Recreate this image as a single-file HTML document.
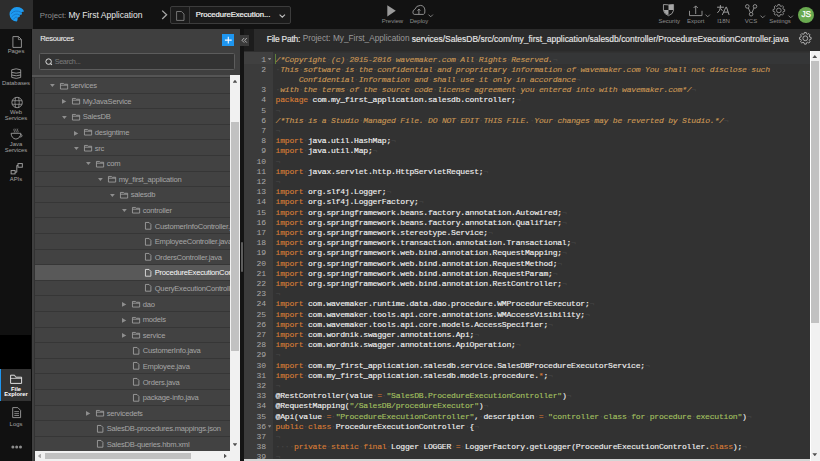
<!DOCTYPE html>
<html><head><meta charset="utf-8">
<style>
*{box-sizing:border-box;margin:0;padding:0}
html,body{width:820px;height:461px;overflow:hidden;background:#111;font-family:"Liberation Sans",sans-serif}
.abs{position:absolute}
#hdr{position:absolute;left:0;top:0;width:820px;height:28.8px;background:#121212}
#logo{position:absolute;left:0;top:0;width:33px;height:28.8px;background:#2d2d2d}
.proj{position:absolute;left:39.8px;top:9.6px;font-size:7.8px;color:#8f8f8f;white-space:pre;line-height:11px}
.proj b{font-weight:400;color:#e8e8e8;font-size:8.55px}
#dd{position:absolute;left:170.1px;top:6.4px;width:120.7px;height:17.4px;border:0.8px solid #3c3c3c;border-radius:2px;background:#1b1b1b}
#dd .div{position:absolute;left:18.4px;top:0;width:0.8px;height:100%;background:#3c3c3c}
#dd .t{position:absolute;left:24.6px;top:3px;font-size:7.7px;color:#f6f6f6;line-height:10px;white-space:pre;letter-spacing:-0.05px;-webkit-text-stroke:0.2px #f6f6f6}
.tl{position:absolute;font-size:6px;color:#8c8c8c;white-space:pre;line-height:7px;text-align:center}
svg{position:absolute;overflow:visible}
#side{position:absolute;left:0;top:28.8px;width:31.6px;height:432.2px;background:#111}
#sidesep{position:absolute;left:31.4px;top:28.8px;width:0.6px;height:432.2px;background:#0c0c0c}
.sl{position:absolute;left:0;width:32px;text-align:center;font-size:5.9px;line-height:5.9px;color:#a4a4a4}
#panel{position:absolute;left:31.6px;top:28.8px;width:208.4px;height:432.2px;background:#3f3f3f;overflow:hidden}
#tree{position:absolute;left:3.5px;top:49.2px;width:194.9px;height:373px;background:#3a3a3a;overflow:hidden}
#tbord{position:absolute;left:2.6px;top:48.8px;width:0.9px;height:383.4px;background:#333}
.res{position:absolute;left:8.6px;top:5.1px;font-size:7.6px;letter-spacing:-0.3px;color:#ececec;line-height:9px;-webkit-text-stroke:0.1px #ececec}
#plus{position:absolute;left:190px;top:5px;width:12.5px;height:12.1px;background:#1e96f0}
#search{position:absolute;left:7.8px;top:24.2px;width:195.9px;height:17.2px;border:0.8px solid #5c5c5c;border-radius:1.5px;background:#333}
#search .t{position:absolute;left:14.3px;top:3.5px;font-size:7.3px;letter-spacing:-0.38px;color:#7a7a7a;line-height:9px}
#hline{position:absolute;left:0;top:46.6px;width:208.4px;height:1.3px;background:#555}
#hline2{position:absolute;left:0;top:47.9px;width:208.4px;height:1.3px;background:#373737}
.row{position:absolute;left:0;width:194.9px;height:15.6px;background:#424242;border-bottom:0.7px solid #363636}
.row.sel{background:#595959}
.tn{position:absolute;top:4.3px;font-size:7.6px;letter-spacing:-0.22px;color:#a6a6a6;line-height:8px;white-space:pre}
.sel .tn{color:#fafafa}
.ic{position:absolute}
.tri-d{position:absolute;top:6.2px;width:0;height:0;border-left:2.9px solid transparent;border-right:2.9px solid transparent;border-top:4.4px solid #909090;margin-left:-2.9px}
.tri-r{position:absolute;top:4.9px;width:0;height:0;border-top:2.9px solid transparent;border-bottom:2.9px solid transparent;border-left:4.8px solid #909090;margin-left:-2.4px}
.fold-ic{position:absolute;top:5.6px;width:8px;height:5.6px;border:0.8px solid #9c9c9c;border-radius:0.5px}
.fold-ic:before{content:"";position:absolute;left:-0.8px;top:-1.8px;width:3.6px;height:1.8px;border:0.8px solid #9c9c9c;border-bottom:none;border-radius:0.5px 0.5px 0 0}
.fold-ic:after{content:"";position:absolute;left:0;top:0.9px;width:6.4px;height:0.7px;background:#9c9c9c}
.file-ic{position:absolute;top:4.5px;width:6.4px;height:7.6px}
.file-ic:before{content:"";position:absolute;left:0;top:0;width:6.4px;height:7.6px;background:#a8a8a8;clip-path:polygon(0 0,62% 0,100% 32%,100% 100%,0 100%,0 0,13% 10%,13% 90%,87% 90%,87% 38%,58% 10%,13% 10%)}
.sel .file-ic:before{background:#e8e8e8}
#vs{position:absolute;left:198.4px;top:46.3px;width:10px;height:375.9px;background:#f1f1f1}
#vs .th{position:absolute;left:1.3px;top:47.1px;width:8.1px;height:228.4px;background:#c1c1c1}
#hs{position:absolute;left:3.5px;top:422.2px;width:194.9px;height:10px;background:#f1f1f1}
#hs .th{position:absolute;left:10.3px;top:1.7px;width:145.6px;height:6.6px;background:#c1c1c1}
#corner{position:absolute;left:198.4px;top:422.2px;width:10px;height:10px;background:#f1f1f1}
.arr-u{position:absolute;width:4.8px;height:3px;background:#505050;clip-path:polygon(50% 0,100% 100%,0 100%)}
.arr-d{position:absolute;width:4.8px;height:3px;background:#505050;clip-path:polygon(0 0,100% 0,50% 100%)}
.arr-l{position:absolute;width:3px;height:4.8px;background:#a3a3a3;clip-path:polygon(0 50%,100% 0,100% 100%)}
.arr-r{position:absolute;width:3px;height:4.8px;background:#505050;clip-path:polygon(0 0,100% 50%,0 100%)}
#strip{position:absolute;left:240px;top:28.8px;width:4px;height:432.2px;background:#141414}
#coll{position:absolute;left:240.3px;top:35.3px;width:8.7px;height:10.6px;background:#3a3a3a}
#fpleft{position:absolute;left:244px;top:28.8px;width:9.7px;height:21.8px;background:#1c1c1c}
#fp{position:absolute;left:253.7px;top:28.8px;width:566.3px;height:21.8px;background:#2b2b2b}
#fp .t{position:absolute;top:5.4px;font-size:8.4px;color:#e6e6e6;line-height:10px;white-space:pre}
#fp .t.g{color:#9a9a9a}
#edsep{position:absolute;left:244px;top:50.6px;width:576px;height:0.9px;background:#2f2f2f}
#gutter{position:absolute;left:244px;top:51.5px;width:29.2px;height:408px;background:#3b3b3b}
#code{position:absolute;left:273.2px;top:51.5px;width:536.5px;height:408px;background:#323232}
#gact{position:absolute;left:244px;top:51.5px;width:29.2px;height:12.1px;background:#404040}
#cact{position:absolute;left:273.2px;top:53.4px;width:536.5px;height:10.2px;background:#353637}
#cursor{position:absolute;left:274.9px;top:53.8px;width:1.2px;height:9.8px;background:#6f9a3a;opacity:.75}
.ln{position:absolute;left:244px;width:21.8px;height:10.2px;line-height:10.2px;text-align:right;font-family:"Liberation Mono",monospace;font-size:8.1px;letter-spacing:-0.24px;color:#a8a8a8}
.ln .fold{position:absolute;left:23.8px;top:3.5px;width:3.6px;height:2.4px;background:#8a8a8a;clip-path:polygon(0 0,100% 0,50% 100%)}
.cl{position:absolute;left:275.6px;height:10.2px;line-height:10.2px;font-family:"Liberation Mono",monospace;font-size:8.1px;letter-spacing:-0.24px;color:#f4f4f4;white-space:pre;-webkit-text-stroke:0.12px currentColor}
.cl .k{color:#d97d36}
.cl .c{color:#cc9855;font-style:italic}
.cl .s{color:#a5c261}
.cl .iv{color:#464646;font-style:normal}
#evs{position:absolute;left:809.8px;top:50.6px;width:10.2px;height:410.4px;background:#f1f1f1;border-left:1.2px solid #fff}
#evs .th{position:absolute;left:0.3px;top:10.8px;width:7.6px;height:262px;background:#c1c1c1}
#ehs{position:absolute;left:244px;top:459.3px;width:565.7px;height:1.7px;background:#d6d6d6}
</style></head><body>
<div id="hdr">
  <div id="logo">
    <svg width="33" height="29" style="left:0;top:0" viewBox="0 0 33 29">
      <path d="M16.8 21.6 A7.25 7.25 0 0 1 16.8 7.1 Q22.5 7.3 24.1 11.6 Q22.6 11.7 21.3 12.5 Q22.4 13.3 21.9 14.5 Q20.6 14.5 19.7 15.1 Q20.2 16 19.7 16.8 Q18.4 17 17.6 18 Q17.9 20.4 16.8 21.6 Z" fill="#1d9af0"/>
      <path d="M10.9 13.9 Q15.2 8.9 21.5 12.5 M11.7 16.9 Q15.6 12.4 19.8 15.1 M13.4 19.4 Q16 15.6 17.7 18" stroke="#1673c2" stroke-width="0.9" fill="none"/>
    </svg>
  </div>
  <div class="proj">Project: <b>My First Application</b></div>
  <svg width="8" height="10" style="left:161px;top:9.8px" viewBox="0 0 8 10"><path d="M1.2 0.6 L5.6 4.8 L1.2 9" stroke="#a8a8a8" stroke-width="1.3" fill="none"/></svg>
  <div id="dd"><div class="div"></div>
    <svg width="9" height="10" style="left:5.2px;top:3.6px" viewBox="0 0 9 10"><path d="M0.6 0.5 H5.4 L8 3 V9.4 H0.6 Z" stroke="#8a8a8a" stroke-width="0.8" fill="none"/></svg>
    <div class="t">ProcedureExecution...</div>
    <svg width="7" height="4" style="left:108.2px;top:6.8px" viewBox="0 0 7 4"><path d="M0.6 0.6 L3.3 3.2 L6 0.6" stroke="#c0c0c0" stroke-width="1.1" fill="none"/></svg>
  </div>
  <!-- Preview -->
  <svg width="10" height="12" style="left:387.1px;top:4.6px" viewBox="0 0 10 12"><path d="M0.3 0.2 L8.8 5.8 L0.3 11.4 Z" fill="#9b9b9b"/></svg>
  <div class="tl" style="left:381.5px;top:17.8px;width:22px">Preview</div>
  <!-- Deploy -->
  <svg width="15" height="12" style="left:412px;top:4px" viewBox="0 0 15 12"><path d="M2.2 10.4 Q0.9 10.2 0.9 8.2 Q0.9 6 2.8 5.4 Q4.2 1.4 8.4 1.4 Q12.4 1.6 12.9 6 Q13.3 10.2 11.4 10.4 Z" stroke="#9c9c9c" stroke-width="0.9" fill="none"/><path d="M6.9 10.2 V5.2 M5.5 6.6 L6.9 5 L8.3 6.6" stroke="#9c9c9c" stroke-width="0.9" fill="none"/></svg>
  <svg width="6" height="4" style="left:428px;top:14.4px" viewBox="0 0 6 4"><path d="M0.5 0.6 L2.7 2.8 L4.9 0.6" stroke="#9a9a9a" stroke-width="0.8" fill="none"/></svg>
  <div class="tl" style="left:409.5px;top:17.8px;width:19px">Deploy</div>
  <!-- Security -->
  <svg width="12" height="13" style="left:662.9px;top:4.3px" viewBox="0 0 12 13"><path d="M0.45 0.5 Q5.5 1.2 10.55 0.5 V6.2 Q10.3 9.9 5.5 11.7 Q0.7 9.9 0.45 6.2 Z" fill="#151515" stroke="#a0a0a0" stroke-width="0.9"/><path d="M5.5 0.95 Q8 1 10.1 0.85 V6 H5.5 Z" fill="#a6a6a6"/><path d="M0.9 6 H5.5 V11.1 Q1.2 9.4 0.9 6 Z" fill="#a6a6a6"/></svg>
  <div class="tl" style="left:658px;top:17.8px;width:22.5px">Security</div>
  <!-- Export -->
  <svg width="14" height="12" style="left:688.8px;top:5px" viewBox="0 0 14 12"><path d="M0.5 5.8 V10.6 H13 V5.8" stroke="#9a9a9a" stroke-width="0.9" fill="none"/><path d="M6.7 9 V0.9 M4.6 3 L6.7 0.9 L8.8 3" stroke="#9a9a9a" stroke-width="0.9" fill="none"/></svg>
  <svg width="6" height="4" style="left:705px;top:14.4px" viewBox="0 0 6 4"><path d="M0.5 0.6 L2.7 2.8 L4.9 0.6" stroke="#9a9a9a" stroke-width="0.8" fill="none"/></svg>
  <div class="tl" style="left:686.5px;top:17.8px;width:18.5px">Export</div>
  <!-- I18N -->
  <svg width="16" height="14" style="left:716px;top:4px" viewBox="0 0 16 14"><path d="M1.1 3.2 H7.9 M4.4 1.1 V3.6 Q4.1 6.6 1.4 8.9 M4.7 4.6 L6.4 6.8" stroke="#a8a8a8" stroke-width="0.95" fill="none"/><path d="M6.3 10.9 L9.9 3.2 H10.5 L13.1 10.9 M7.6 8.1 H11.9" stroke="#a8a8a8" stroke-width="0.95" fill="none"/></svg>
  <div class="tl" style="left:716.5px;top:17.8px;width:14px">I18N</div>
  <!-- VCS -->
  <svg width="13" height="13" style="left:745px;top:3.9px" viewBox="0 0 13 13"><circle cx="2.3" cy="2.4" r="1.8" stroke="#9a9a9a" stroke-width="0.9" fill="none"/><circle cx="10" cy="2.4" r="1.8" stroke="#9a9a9a" stroke-width="0.9" fill="none"/><circle cx="6.1" cy="10.2" r="1.8" stroke="#9a9a9a" stroke-width="0.9" fill="none"/><path d="M3.3 3.9 L5.3 8.6 M9 3.9 L7 8.6" stroke="#9a9a9a" stroke-width="0.9"/></svg>
  <svg width="6" height="4" style="left:759.6px;top:14.5px" viewBox="0 0 6 4"><path d="M0.5 0.6 L2.7 2.8 L4.9 0.6" stroke="#9a9a9a" stroke-width="0.8" fill="none"/></svg>
  <div class="tl" style="left:744.5px;top:17.8px;width:13px">VCS</div>
  <!-- Settings -->
  <svg width="14" height="14" style="left:771.6px;top:3.6px" viewBox="0 0 14 14" id="gear1"><g transform="translate(6.85 6.4)"><path id="gp" d="M-0.92 -5.83 L0.92 -5.83 L1.16 -4.45 L2.33 -3.97 L3.47 -4.77 L4.77 -3.47 L3.97 -2.33 L4.45 -1.16 L5.83 -0.92 L5.83 0.92 L4.45 1.16 L3.97 2.33 L4.77 3.47 L3.47 4.77 L2.33 3.97 L1.16 4.45 L0.92 5.83 L-0.92 5.83 L-1.16 4.45 L-2.33 3.97 L-3.47 4.77 L-4.77 3.47 L-3.97 2.33 L-4.45 1.16 L-5.83 0.92 L-5.83 -0.92 L-4.45 -1.16 L-3.97 -2.33 L-4.77 -3.47 L-3.47 -4.77 L-2.33 -3.97 L-1.16 -4.45 Z" stroke="#9a9a9a" stroke-width="0.85" fill="none" stroke-linejoin="round"/><circle r="2.3" stroke="#9a9a9a" stroke-width="0.85" fill="none"/></g></svg>
  <svg width="6" height="4" style="left:787.8px;top:14.5px" viewBox="0 0 6 4"><path d="M0.5 0.6 L2.7 2.8 L4.9 0.6" stroke="#9a9a9a" stroke-width="0.8" fill="none"/></svg>
  <div class="tl" style="left:768.5px;top:17.8px;width:23px">Settings</div>
  <!-- avatar -->
  <div class="abs" style="left:798.2px;top:6.6px;width:16px;height:16px;border-radius:50%;background:#6aaa50"></div>
  <div class="abs" style="left:798.2px;top:11.3px;width:16px;text-align:center;font-size:8.2px;line-height:8px;font-weight:400;letter-spacing:-0.2px;color:#fff;-webkit-text-stroke:0.25px #fff">JS</div>
</div>

<div id="side">
  <!-- Pages -->
  <svg width="11" height="13" style="left:12px;top:7.2px" viewBox="0 0 11 13"><path d="M0.9 0.6 H6.6 L9.4 3.4 V11.4 H0.9 Z" stroke="#9d9d9d" stroke-width="0.9" fill="none" stroke-linejoin="round"/><path d="M6.4 0.8 V3.6 H9.2" stroke="#9d9d9d" stroke-width="0.7" fill="none"/></svg>
  <div class="sl" style="top:20.4px">Pages</div>
  <!-- Databases -->
  <svg width="12" height="12" style="left:11.4px;top:38.9px" viewBox="0 0 12 12"><path d="M0.7 1.8 Q5.2 -0.2 9.7 1.8 V9.4 Q5.2 11.4 0.7 9.4 Z" stroke="#9d9d9d" stroke-width="0.9" fill="none"/><path d="M0.7 4.4 Q5.2 6 9.7 4.4 M0.7 7 Q5.2 8.6 9.7 7" stroke="#9d9d9d" stroke-width="0.9" fill="none"/></svg>
  <div class="sl" style="top:52.1px">Databases</div>
  <!-- Web Services -->
  <svg width="13" height="12" style="left:10.6px;top:67.9px" viewBox="0 0 13 12"><circle cx="6.1" cy="5.5" r="5.2" stroke="#9d9d9d" stroke-width="0.9" fill="none"/><path d="M1.2 3.7 H11 M1.2 7.3 H11 M4.5 0.7 Q3.4 5.5 4.5 10.3 M7.7 0.7 Q8.8 5.5 7.7 10.3" stroke="#9d9d9d" stroke-width="0.75" fill="none"/></svg>
  <div class="sl" style="top:81.3px">Web<br>Services</div>
  <!-- Java Services -->
  <svg width="14" height="12" style="left:10px;top:99.9px" viewBox="0 0 14 12"><path d="M4.2 -0.3 Q3.5 0.8 4.2 1.8 Q4.8 2.7 4.2 3.5 M6 -0.3 Q5.3 0.8 6 1.8 Q6.6 2.7 6 3.5 M7.8 -0.3 Q7.1 0.8 7.8 1.8 Q8.4 2.7 7.8 3.5" stroke="#9d9d9d" stroke-width="0.7" fill="none"/><path d="M1.1 4.3 H10.8 Q10.5 9.4 5.9 10.1 Q1.4 9.4 1.1 4.3 Z" stroke="#9d9d9d" stroke-width="0.9" fill="none"/><path d="M10.6 5.3 Q12.9 5.7 11.8 7.5 Q11 8.2 9.6 8" stroke="#9d9d9d" stroke-width="0.8" fill="none"/></svg>
  <div class="sl" style="top:113.1px">Java<br>Services</div>
  <!-- APIs -->
  <svg width="14" height="13" style="left:10px;top:134.3px" viewBox="0 0 14 13"><rect x="1.1" y="7.6" width="4" height="3.3" stroke="#a8a8a8" stroke-width="0.9" fill="none"/><rect x="8" y="0.6" width="4.3" height="3.6" stroke="#a8a8a8" stroke-width="0.9" fill="none"/><path d="M5.1 9.2 H6.8 V2.4 H8" stroke="#a8a8a8" stroke-width="0.9" fill="none"/></svg>
  <div class="sl" style="top:148.2px">APIs</div>
  <!-- black region -->
  <div class="abs" style="left:0;top:306.1px;width:32px;height:34.2px;background:#000"></div>
  <!-- file explorer active -->
  <div class="abs" style="left:0;top:340.3px;width:32px;height:32px;background:#333"></div>
  <div class="abs" style="left:0;top:340.3px;width:1.3px;height:32px;background:#1e96f0"></div>
  <svg width="13" height="11" style="left:10.2px;top:345.4px" viewBox="0 0 13 11"><path d="M0.6 2 V9.4 H11.6 V3.2 H5.6 L4.6 1.2 H0.6 Z" stroke="#f0f0f0" stroke-width="0.9" fill="none"/><path d="M0.6 4.4 H11.6" stroke="#f0f0f0" stroke-width="0.7"/></svg>
  <div class="sl" style="top:357.9px;color:#fff;font-weight:700;font-size:5.8px;line-height:5.8px">File<br>Explorer</div>
  <!-- Logs -->
  <svg width="10" height="12" style="left:12.2px;top:378.7px" viewBox="0 0 10 12"><path d="M0.7 0.6 H5.8 L8.6 3.4 V10.6 H0.7 Z" stroke="#9d9d9d" stroke-width="0.9" fill="none"/><path d="M2.3 4.6 H7 M2.3 6.6 H7 M2.3 8.5 H7" stroke="#9d9d9d" stroke-width="0.8"/></svg>
  <div class="sl" style="top:393.2px">Logs</div>
  <svg width="14" height="5" style="left:10.9px;top:416.6px" viewBox="0 0 14 5"><circle cx="1.9" cy="2" r="1.5" fill="#8c8c8c"/><circle cx="5.7" cy="2" r="1.5" fill="#8c8c8c"/><circle cx="9.5" cy="2" r="1.5" fill="#8c8c8c"/></svg>
</div>
<div id="sidesep"></div>

<div id="panel">
  <div class="res">Resources</div>
  <div id="plus"><svg width="13" height="12" style="left:0;top:0" viewBox="0 0 13 12"><path d="M6.3 2.7 V9.5 M2.9 6.1 H9.7" stroke="#f4f8ff" stroke-width="1.1"/></svg></div>
  <div id="search">
    <svg width="9" height="9" style="left:4.7px;top:3.9px" viewBox="0 0 9 9"><circle cx="3.6" cy="3.6" r="2.75" stroke="#dcdcdc" stroke-width="1" fill="none"/><path d="M5.5 5.5 L6.9 6.9" stroke="#dcdcdc" stroke-width="1.1"/></svg>
    <div class="t">Search...</div>
  </div>
  <div id="hline"></div><div id="hline2"></div>
<div id="tree">
<div class="row" style="top:0.00px"><svg class=ic width="6" height="4" style="left:14.90px;top:6.5px"><path d="M0 0 H4.8 L2.4 3.1 Z" fill="#8e8e8e"/></svg><svg class=ic width="9" height="7" style="left:25.10px;top:4.7px"><path d="M0.45 0.45 H3.5 L4.3 1.25 H7.65 V6.05 H0.45 Z M0.45 2.2 H7.65" stroke="#a0a0a0" stroke-width="0.85" fill="none"/></svg><span class=tn style="left:35.6px">services</span></div>
<div class="row" style="top:15.60px"><svg class=ic width="5" height="6" style="left:26.90px;top:5.9px"><path d="M0 0 L4.3 2.4 L0 4.8 Z" fill="#8e8e8e"/></svg><svg class=ic width="9" height="7" style="left:37.10px;top:4.7px"><path d="M0.45 0.45 H3.5 L4.3 1.25 H7.65 V6.05 H0.45 Z M0.45 2.2 H7.65" stroke="#a0a0a0" stroke-width="0.85" fill="none"/></svg><span class=tn style="left:47.6px">MyJavaService</span></div>
<div class="row" style="top:31.20px"><svg class=ic width="6" height="4" style="left:26.90px;top:6.5px"><path d="M0 0 H4.8 L2.4 3.1 Z" fill="#8e8e8e"/></svg><svg class=ic width="9" height="7" style="left:37.10px;top:4.7px"><path d="M0.45 0.45 H3.5 L4.3 1.25 H7.65 V6.05 H0.45 Z M0.45 2.2 H7.65" stroke="#a0a0a0" stroke-width="0.85" fill="none"/></svg><span class=tn style="left:47.6px">SalesDB</span></div>
<div class="row" style="top:46.80px"><svg class=ic width="5" height="6" style="left:38.90px;top:5.9px"><path d="M0 0 L4.3 2.4 L0 4.8 Z" fill="#8e8e8e"/></svg><svg class=ic width="9" height="7" style="left:49.10px;top:4.7px"><path d="M0.45 0.45 H3.5 L4.3 1.25 H7.65 V6.05 H0.45 Z M0.45 2.2 H7.65" stroke="#a0a0a0" stroke-width="0.85" fill="none"/></svg><span class=tn style="left:59.6px">designtime</span></div>
<div class="row" style="top:62.40px"><svg class=ic width="6" height="4" style="left:38.90px;top:6.5px"><path d="M0 0 H4.8 L2.4 3.1 Z" fill="#8e8e8e"/></svg><svg class=ic width="9" height="7" style="left:49.10px;top:4.7px"><path d="M0.45 0.45 H3.5 L4.3 1.25 H7.65 V6.05 H0.45 Z M0.45 2.2 H7.65" stroke="#a0a0a0" stroke-width="0.85" fill="none"/></svg><span class=tn style="left:59.6px">src</span></div>
<div class="row" style="top:78.00px"><svg class=ic width="6" height="4" style="left:50.90px;top:6.5px"><path d="M0 0 H4.8 L2.4 3.1 Z" fill="#8e8e8e"/></svg><svg class=ic width="9" height="7" style="left:61.10px;top:4.7px"><path d="M0.45 0.45 H3.5 L4.3 1.25 H7.65 V6.05 H0.45 Z M0.45 2.2 H7.65" stroke="#a0a0a0" stroke-width="0.85" fill="none"/></svg><span class=tn style="left:71.6px">com</span></div>
<div class="row" style="top:93.60px"><svg class=ic width="6" height="4" style="left:62.90px;top:6.5px"><path d="M0 0 H4.8 L2.4 3.1 Z" fill="#8e8e8e"/></svg><svg class=ic width="9" height="7" style="left:73.10px;top:4.7px"><path d="M0.45 0.45 H3.5 L4.3 1.25 H7.65 V6.05 H0.45 Z M0.45 2.2 H7.65" stroke="#a0a0a0" stroke-width="0.85" fill="none"/></svg><span class=tn style="left:83.6px">my_first_application</span></div>
<div class="row" style="top:109.20px"><svg class=ic width="6" height="4" style="left:74.90px;top:6.5px"><path d="M0 0 H4.8 L2.4 3.1 Z" fill="#8e8e8e"/></svg><svg class=ic width="9" height="7" style="left:85.10px;top:4.7px"><path d="M0.45 0.45 H3.5 L4.3 1.25 H7.65 V6.05 H0.45 Z M0.45 2.2 H7.65" stroke="#a0a0a0" stroke-width="0.85" fill="none"/></svg><span class=tn style="left:95.6px">salesdb</span></div>
<div class="row" style="top:124.80px"><svg class=ic width="6" height="4" style="left:86.90px;top:6.5px"><path d="M0 0 H4.8 L2.4 3.1 Z" fill="#8e8e8e"/></svg><svg class=ic width="9" height="7" style="left:97.10px;top:4.7px"><path d="M0.45 0.45 H3.5 L4.3 1.25 H7.65 V6.05 H0.45 Z M0.45 2.2 H7.65" stroke="#a0a0a0" stroke-width="0.85" fill="none"/></svg><span class=tn style="left:107.6px">controller</span></div>
<div class="row" style="top:140.40px"><svg class=ic width="7" height="8" style="left:109.90px;top:3.7px"><path d="M0.45 0.45 H4 L5.9 2.35 V7.2 H0.45 Z" stroke="#a4a4a4" stroke-width="0.85" fill="none"/></svg><span class=tn style="left:119.6px">CustomerInfoController.java</span></div>
<div class="row" style="top:156.00px"><svg class=ic width="7" height="8" style="left:109.90px;top:3.7px"><path d="M0.45 0.45 H4 L5.9 2.35 V7.2 H0.45 Z" stroke="#a4a4a4" stroke-width="0.85" fill="none"/></svg><span class=tn style="left:119.6px">EmployeeController.java</span></div>
<div class="row" style="top:171.60px"><svg class=ic width="7" height="8" style="left:109.90px;top:3.7px"><path d="M0.45 0.45 H4 L5.9 2.35 V7.2 H0.45 Z" stroke="#a4a4a4" stroke-width="0.85" fill="none"/></svg><span class=tn style="left:119.6px">OrdersController.java</span></div>
<div class="row sel" style="top:187.20px"><svg class=ic width="7" height="8" style="left:109.90px;top:3.7px"><path d="M0.45 0.45 H4 L5.9 2.35 V7.2 H0.45 Z" stroke="#e6e6e6" stroke-width="0.85" fill="none"/></svg><span class=tn style="left:119.6px">ProcedureExecutionController.java</span></div>
<div class="row" style="top:202.80px"><svg class=ic width="7" height="8" style="left:109.90px;top:3.7px"><path d="M0.45 0.45 H4 L5.9 2.35 V7.2 H0.45 Z" stroke="#a4a4a4" stroke-width="0.85" fill="none"/></svg><span class=tn style="left:119.6px">QueryExecutionController.java</span></div>
<div class="row" style="top:218.40px"><svg class=ic width="5" height="6" style="left:86.90px;top:5.9px"><path d="M0 0 L4.3 2.4 L0 4.8 Z" fill="#8e8e8e"/></svg><svg class=ic width="9" height="7" style="left:97.10px;top:4.7px"><path d="M0.45 0.45 H3.5 L4.3 1.25 H7.65 V6.05 H0.45 Z M0.45 2.2 H7.65" stroke="#a0a0a0" stroke-width="0.85" fill="none"/></svg><span class=tn style="left:107.6px">dao</span></div>
<div class="row" style="top:234.00px"><svg class=ic width="5" height="6" style="left:86.90px;top:5.9px"><path d="M0 0 L4.3 2.4 L0 4.8 Z" fill="#8e8e8e"/></svg><svg class=ic width="9" height="7" style="left:97.10px;top:4.7px"><path d="M0.45 0.45 H3.5 L4.3 1.25 H7.65 V6.05 H0.45 Z M0.45 2.2 H7.65" stroke="#a0a0a0" stroke-width="0.85" fill="none"/></svg><span class=tn style="left:107.6px">models</span></div>
<div class="row" style="top:249.60px"><svg class=ic width="5" height="6" style="left:86.90px;top:5.9px"><path d="M0 0 L4.3 2.4 L0 4.8 Z" fill="#8e8e8e"/></svg><svg class=ic width="9" height="7" style="left:97.10px;top:4.7px"><path d="M0.45 0.45 H3.5 L4.3 1.25 H7.65 V6.05 H0.45 Z M0.45 2.2 H7.65" stroke="#a0a0a0" stroke-width="0.85" fill="none"/></svg><span class=tn style="left:107.6px">service</span></div>
<div class="row" style="top:265.20px"><svg class=ic width="7" height="8" style="left:97.90px;top:3.7px"><path d="M0.45 0.45 H4 L5.9 2.35 V7.2 H0.45 Z" stroke="#a4a4a4" stroke-width="0.85" fill="none"/></svg><span class=tn style="left:107.6px">CustomerInfo.java</span></div>
<div class="row" style="top:280.80px"><svg class=ic width="7" height="8" style="left:97.90px;top:3.7px"><path d="M0.45 0.45 H4 L5.9 2.35 V7.2 H0.45 Z" stroke="#a4a4a4" stroke-width="0.85" fill="none"/></svg><span class=tn style="left:107.6px">Employee.java</span></div>
<div class="row" style="top:296.40px"><svg class=ic width="7" height="8" style="left:97.90px;top:3.7px"><path d="M0.45 0.45 H4 L5.9 2.35 V7.2 H0.45 Z" stroke="#a4a4a4" stroke-width="0.85" fill="none"/></svg><span class=tn style="left:107.6px">Orders.java</span></div>
<div class="row" style="top:312.00px"><svg class=ic width="7" height="8" style="left:97.90px;top:3.7px"><path d="M0.45 0.45 H4 L5.9 2.35 V7.2 H0.45 Z" stroke="#a4a4a4" stroke-width="0.85" fill="none"/></svg><span class=tn style="left:107.6px">package-info.java</span></div>
<div class="row" style="top:327.60px"><svg class=ic width="5" height="6" style="left:50.90px;top:5.9px"><path d="M0 0 L4.3 2.4 L0 4.8 Z" fill="#8e8e8e"/></svg><svg class=ic width="9" height="7" style="left:61.10px;top:4.7px"><path d="M0.45 0.45 H3.5 L4.3 1.25 H7.65 V6.05 H0.45 Z M0.45 2.2 H7.65" stroke="#a0a0a0" stroke-width="0.85" fill="none"/></svg><span class=tn style="left:71.6px">servicedefs</span></div>
<div class="row" style="top:343.20px"><svg class=ic width="7" height="8" style="left:61.90px;top:3.7px"><path d="M0.45 0.45 H4 L5.9 2.35 V7.2 H0.45 Z" stroke="#a4a4a4" stroke-width="0.85" fill="none"/></svg><span class=tn style="left:71.6px">SalesDB-procedures.mappings.json</span></div>
<div class="row" style="top:358.80px"><svg class=ic width="7" height="8" style="left:61.90px;top:3.7px"><path d="M0.45 0.45 H4 L5.9 2.35 V7.2 H0.45 Z" stroke="#a4a4a4" stroke-width="0.85" fill="none"/></svg><span class=tn style="left:71.6px">SalesDB-queries.hbm.xml</span></div>
<div class="row" style="top:374.40px"><svg class=ic width="7" height="8" style="left:61.90px;top:3.7px"><path d="M0.45 0.45 H4 L5.9 2.35 V7.2 H0.45 Z" stroke="#a4a4a4" stroke-width="0.85" fill="none"/></svg></div>
</div><div id="tbord"></div>
  <div id="vs"><div class="th"></div><i class="arr-u" style="left:2.6px;top:4.7px"></i><i class="arr-d" style="left:2.6px;top:368.1px"></i></div>
  <div id="hs"><div class="th"></div><i class="arr-l" style="left:2.8px;top:2.6px"></i><i class="arr-r" style="left:188.7px;top:2.6px"></i></div>
  <div id="corner"></div>
</div>

<div id="strip"></div>
<div class="abs" style="left:240.9px;top:241.7px;width:2.4px;height:30.6px;border-radius:1.2px;background:#5c5c5c"></div>
<div id="fpleft"></div>
<div id="coll"><svg width="9" height="11" style="left:0;top:0" viewBox="0 0 9 11"><path d="M4.2 3 L2 5.3 L4.2 7.6 M6.8 3 L4.6 5.3 L6.8 7.6" stroke="#bdbdbd" stroke-width="0.9" fill="none"/></svg></div>
<div id="fp">
  <div class="t" style="left:13.1px;font-size:8.4px;letter-spacing:-0.2px;-webkit-text-stroke:0.15px #e6e6e6">File Path:</div><div class="t g" style="left:49px;font-size:8.25px">Project: My_First_Application</div><div class="t" style="left:158px;font-size:8.48px;-webkit-text-stroke:0.15px #e6e6e6">services/SalesDB/src/com/my_first_application/salesdb/controller/ProcedureExecutionController.java</div>
  <svg width="14" height="14" style="left:545px;top:3.7px" viewBox="0 0 14 14"><g transform="translate(6.3 6.3)"><path d="M-0.92 -5.83 L0.92 -5.83 L1.16 -4.45 L2.33 -3.97 L3.47 -4.77 L4.77 -3.47 L3.97 -2.33 L4.45 -1.16 L5.83 -0.92 L5.83 0.92 L4.45 1.16 L3.97 2.33 L4.77 3.47 L3.47 4.77 L2.33 3.97 L1.16 4.45 L0.92 5.83 L-0.92 5.83 L-1.16 4.45 L-2.33 3.97 L-3.47 4.77 L-4.77 3.47 L-3.97 2.33 L-4.45 1.16 L-5.83 0.92 L-5.83 -0.92 L-4.45 -1.16 L-3.97 -2.33 L-4.77 -3.47 L-3.47 -4.77 L-2.33 -3.97 L-1.16 -4.45 Z" stroke="#b8b8b8" stroke-width="0.9" fill="none" stroke-linejoin="round"/><circle r="2.4" stroke="#b8b8b8" stroke-width="0.9" fill="none"/></g></svg>
</div>
<div id="edsep"></div>
<div id="gutter"></div>
<div id="code"></div>
<div id="gact"></div>
<div id="cact"></div>
<div class=ln style="top:54.60px">1<i class=fold></i></div>
<div class=ln style="top:64.80px">2</div>
<div class=ln style="top:85.20px">3</div>
<div class=ln style="top:95.40px">4</div>
<div class=ln style="top:105.60px">5</div>
<div class=ln style="top:115.80px">6</div>
<div class=ln style="top:126.00px">7</div>
<div class=ln style="top:136.20px">8</div>
<div class=ln style="top:146.40px">9</div>
<div class=ln style="top:156.60px">10</div>
<div class=ln style="top:166.80px">11</div>
<div class=ln style="top:177.00px">12</div>
<div class=ln style="top:187.20px">13</div>
<div class=ln style="top:197.40px">14</div>
<div class=ln style="top:207.60px">15</div>
<div class=ln style="top:217.80px">16</div>
<div class=ln style="top:228.00px">17</div>
<div class=ln style="top:238.20px">18</div>
<div class=ln style="top:248.40px">19</div>
<div class=ln style="top:258.60px">20</div>
<div class=ln style="top:268.80px">21</div>
<div class=ln style="top:279.00px">22</div>
<div class=ln style="top:289.20px">23</div>
<div class=ln style="top:299.40px">24</div>
<div class=ln style="top:309.60px">25</div>
<div class=ln style="top:319.80px">26</div>
<div class=ln style="top:330.00px">27</div>
<div class=ln style="top:340.20px">28</div>
<div class=ln style="top:350.40px">29</div>
<div class=ln style="top:360.60px">30</div>
<div class=ln style="top:370.80px">31</div>
<div class=ln style="top:381.00px">32</div>
<div class=ln style="top:391.20px">33</div>
<div class=ln style="top:401.40px">34</div>
<div class=ln style="top:411.60px">35</div>
<div class=ln style="top:421.80px">36<i class=fold></i></div>
<div class=ln style="top:432.00px">37</div>
<div class=ln style="top:442.20px">38</div>
<div class=ln style="top:452.40px">39</div>
<div class=ln style="top:462.60px">40</div>
<div class=cl style="top:54.60px"><span class=c>/*Copyright<i class=iv>·</i>(c)<i class=iv>·</i>2015-2016<i class=iv>·</i>wavemaker.com<i class=iv>·</i>All<i class=iv>·</i>Rights<i class=iv>·</i>Reserved.</span><span class=iv>¬</span></div>
<div class=cl style="top:64.80px"><span class=c><i class=iv>·</i>This<i class=iv>·</i>software<i class=iv>·</i>is<i class=iv>·</i>the<i class=iv>·</i>confidential<i class=iv>·</i>and<i class=iv>·</i>proprietary<i class=iv>·</i>information<i class=iv>·</i>of<i class=iv>·</i>wavemaker.com<i class=iv>·</i>You<i class=iv>·</i>shall<i class=iv>·</i>not<i class=iv>·</i>disclose<i class=iv>·</i>such</span></div>
<div class=cl style="top:75.00px">     <span class=c>Confidential<i class=iv>·</i>Information<i class=iv>·</i>and<i class=iv>·</i>shall<i class=iv>·</i>use<i class=iv>·</i>it<i class=iv>·</i>only<i class=iv>·</i>in<i class=iv>·</i>accordance</span><span class=iv>¬</span></div>
<div class=cl style="top:85.20px"><span class=c><i class=iv>·</i>with<i class=iv>·</i>the<i class=iv>·</i>terms<i class=iv>·</i>of<i class=iv>·</i>the<i class=iv>·</i>source<i class=iv>·</i>code<i class=iv>·</i>license<i class=iv>·</i>agreement<i class=iv>·</i>you<i class=iv>·</i>entered<i class=iv>·</i>into<i class=iv>·</i>with<i class=iv>·</i>wavemaker.com*/</span><span class=iv>¬</span></div>
<div class=cl style="top:95.40px"><span class=k>package</span><i class=iv>·</i>com.my_first_application.salesdb.controller;<span class=iv>¬</span></div>
<div class=cl style="top:105.60px"><span class=iv>¬</span></div>
<div class=cl style="top:115.80px"><span class=c>/*This<i class=iv>·</i>is<i class=iv>·</i>a<i class=iv>·</i>Studio<i class=iv>·</i>Managed<i class=iv>·</i>File.<i class=iv>·</i>DO<i class=iv>·</i>NOT<i class=iv>·</i>EDIT<i class=iv>·</i>THIS<i class=iv>·</i>FILE.<i class=iv>·</i>Your<i class=iv>·</i>changes<i class=iv>·</i>may<i class=iv>·</i>be<i class=iv>·</i>reverted<i class=iv>·</i>by<i class=iv>·</i>Studio.*/</span><span class=iv>¬</span></div>
<div class=cl style="top:126.00px"><span class=iv>¬</span></div>
<div class=cl style="top:136.20px"><span class=k>import</span><i class=iv>·</i>java.util.HashMap;<span class=iv>¬</span></div>
<div class=cl style="top:146.40px"><span class=k>import</span><i class=iv>·</i>java.util.Map;<span class=iv>¬</span></div>
<div class=cl style="top:156.60px"><span class=iv>¬</span></div>
<div class=cl style="top:166.80px"><span class=k>import</span><i class=iv>·</i>javax.servlet.http.HttpServletRequest;<span class=iv>¬</span></div>
<div class=cl style="top:177.00px"><span class=iv>¬</span></div>
<div class=cl style="top:187.20px"><span class=k>import</span><i class=iv>·</i>org.slf4j.Logger;<span class=iv>¬</span></div>
<div class=cl style="top:197.40px"><span class=k>import</span><i class=iv>·</i>org.slf4j.LoggerFactory;<span class=iv>¬</span></div>
<div class=cl style="top:207.60px"><span class=k>import</span><i class=iv>·</i>org.springframework.beans.factory.annotation.Autowired;<span class=iv>¬</span></div>
<div class=cl style="top:217.80px"><span class=k>import</span><i class=iv>·</i>org.springframework.beans.factory.annotation.Qualifier;<span class=iv>¬</span></div>
<div class=cl style="top:228.00px"><span class=k>import</span><i class=iv>·</i>org.springframework.stereotype.Service;<span class=iv>¬</span></div>
<div class=cl style="top:238.20px"><span class=k>import</span><i class=iv>·</i>org.springframework.transaction.annotation.Transactional;<span class=iv>¬</span></div>
<div class=cl style="top:248.40px"><span class=k>import</span><i class=iv>·</i>org.springframework.web.bind.annotation.RequestMapping;<span class=iv>¬</span></div>
<div class=cl style="top:258.60px"><span class=k>import</span><i class=iv>·</i>org.springframework.web.bind.annotation.RequestMethod;<span class=iv>¬</span></div>
<div class=cl style="top:268.80px"><span class=k>import</span><i class=iv>·</i>org.springframework.web.bind.annotation.RequestParam;<span class=iv>¬</span></div>
<div class=cl style="top:279.00px"><span class=k>import</span><i class=iv>·</i>org.springframework.web.bind.annotation.RestController;<span class=iv>¬</span></div>
<div class=cl style="top:289.20px"><span class=iv>¬</span></div>
<div class=cl style="top:299.40px"><span class=k>import</span><i class=iv>·</i>com.wavemaker.runtime.data.dao.procedure.WMProcedureExecutor;<span class=iv>¬</span></div>
<div class=cl style="top:309.60px"><span class=k>import</span><i class=iv>·</i>com.wavemaker.tools.api.core.annotations.WMAccessVisibility;<span class=iv>¬</span></div>
<div class=cl style="top:319.80px"><span class=k>import</span><i class=iv>·</i>com.wavemaker.tools.api.core.models.AccessSpecifier;<span class=iv>¬</span></div>
<div class=cl style="top:330.00px"><span class=k>import</span><i class=iv>·</i>com.wordnik.swagger.annotations.Api;<span class=iv>¬</span></div>
<div class=cl style="top:340.20px"><span class=k>import</span><i class=iv>·</i>com.wordnik.swagger.annotations.ApiOperation;<span class=iv>¬</span></div>
<div class=cl style="top:350.40px"><span class=iv>¬</span></div>
<div class=cl style="top:360.60px"><span class=k>import</span><i class=iv>·</i>com.my_first_application.salesdb.service.SalesDBProcedureExecutorService;<span class=iv>¬</span></div>
<div class=cl style="top:370.80px"><span class=k>import</span><i class=iv>·</i>com.my_first_application.salesdb.models.procedure.<span class=k>*</span>;<span class=iv>¬</span></div>
<div class=cl style="top:381.00px"><span class=iv>¬</span></div>
<div class=cl style="top:391.20px">@RestController(value<i class=iv>·</i><span class=k>=</span><i class=iv>·</i><span class=s>"SalesDB.ProcedureExecutionController"</span>)<span class=iv>¬</span></div>
<div class=cl style="top:401.40px">@RequestMapping(<span class=s>"/SalesDB/procedureExecutor"</span>)<span class=iv>¬</span></div>
<div class=cl style="top:411.60px">@Api(value<i class=iv>·</i><span class=k>=</span><i class=iv>·</i><span class=s>"ProcedureExecutionController"</span>,<i class=iv>·</i>description<i class=iv>·</i><span class=k>=</span><i class=iv>·</i><span class=s>"controller<i class=iv>·</i>class<i class=iv>·</i>for<i class=iv>·</i>procedure<i class=iv>·</i>execution"</span>)<span class=iv>¬</span></div>
<div class=cl style="top:421.80px"><span class=k>public</span><i class=iv>·</i><span class=k>class</span><i class=iv>·</i>ProcedureExecutionController<i class=iv>·</i>{<span class=iv>¬</span></div>
<div class=cl style="top:432.00px"><span class=iv>¬</span></div>
<div class=cl style="top:442.20px"><span class=iv>····</span><span class=k>private</span><i class=iv>·</i><span class=k>static</span><i class=iv>·</i><span class=k>final</span><i class=iv>·</i>Logger<i class=iv>·</i>LOGGER<i class=iv>·</i><span class=k>=</span><i class=iv>·</i>LoggerFactory.getLogger(ProcedureExecutionController.<span class=k>class</span>);<span class=iv>¬</span></div>
<div class=cl style="top:452.40px"><span class=iv>¬</span></div>
<div class=cl style="top:462.60px"><span class=iv>¬</span></div>
<div id="cursor"></div>
<div id="evs"><div class="th"></div><i class="arr-u" style="left:1.6px;top:4.5px"></i><i class="arr-d" style="left:1.6px;top:402.6px"></i></div>
<div id="ehs"></div>
</body></html>
